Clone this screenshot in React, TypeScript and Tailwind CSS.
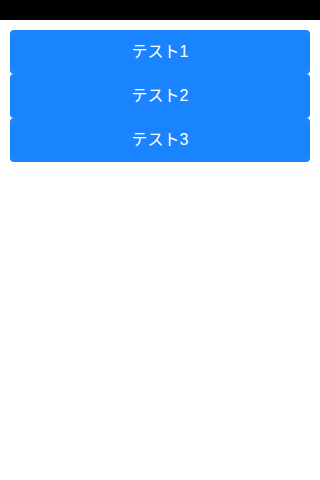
import React from "react";

export default function App() {
  const items = ["テスト1", "テスト2", "テスト3"];
  return (
    <div className="w-[320px] h-[480px] bg-white flex flex-col" style={{ fontFamily: '"Liberation Sans", "Noto Sans CJK JP", sans-serif' }}>
      <div className="h-[20px] bg-black" />
      <div className="flex flex-col px-[10px] pt-[10px]">
        {items.map((t) => (
          <button
            key={t}
            className="h-[44px] w-full rounded-[4px] bg-[#1a84fe] text-white text-[16px] flex items-center justify-center"
          >
            {t}
          </button>
        ))}
      </div>
    </div>
  );
}
